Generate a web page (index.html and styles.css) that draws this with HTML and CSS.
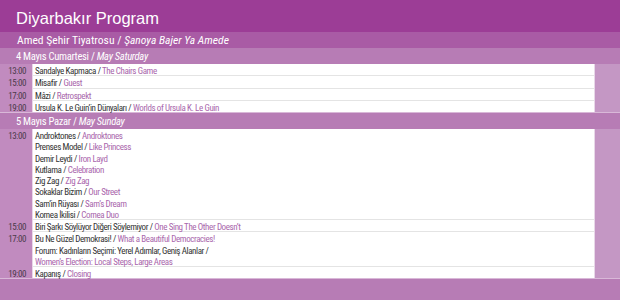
FILE: index.html
```html
<!DOCTYPE html>
<html lang="tr">
<head>
<meta charset="utf-8">
<title>Diyarbakır Program</title>
<link rel="stylesheet" href="styles.css">
</head>
<body>
<div class="page">
  <h1 class="title">Diyarbakır Program</h1>
  <div class="venue">Amed Şehir Tiyatrosu / <em>Şanoya Bajer Ya Amede</em></div>

  <h2 class="day">4 Mayıs Cumartesi / <em>May Saturday</em></h2>
  <div class="table">
    <div class="row">
      <div class="time"><div class="line">13:00</div></div>
      <div class="items"><div class="line">Sandalye Kapmaca / <span class="en">The Chairs Game</span></div></div>
      <div class="edge"></div>
    </div>
    <div class="row">
      <div class="time"><div class="line">15:00</div></div>
      <div class="items"><div class="line">Misafir / <span class="en">Guest</span></div></div>
      <div class="edge"></div>
    </div>
    <div class="row">
      <div class="time"><div class="line">17:00</div></div>
      <div class="items"><div class="line">Mâzi / <span class="en">Retrospekt</span></div></div>
      <div class="edge"></div>
    </div>
    <div class="row">
      <div class="time"><div class="line">19:00</div></div>
      <div class="items"><div class="line">Ursula K. Le Guin’in Dünyaları / <span class="en">Worlds of Ursula K. Le Guin</span></div></div>
      <div class="edge"></div>
    </div>
  </div>

  <h2 class="day">5 Mayıs Pazar / <em>May Sunday</em></h2>
  <div class="table">
    <div class="row">
      <div class="time"><div class="line">13:00</div></div>
      <div class="items">
        <div class="line">Androktones / <span class="en">Androktones</span></div>
        <div class="line">Prenses Model / <span class="en">Like Princess</span></div>
        <div class="line">Demir Leydi / <span class="en">Iron Layd</span></div>
        <div class="line">Kutlama / <span class="en">Celebration</span></div>
        <div class="line">Zig Zag / <span class="en">Zig Zag</span></div>
        <div class="line">Sokaklar Bizim / <span class="en">Our Street</span></div>
        <div class="line">Sam’in Rüyası / <span class="en">Sam’s Dream</span></div>
        <div class="line">Kornea İkilisi / <span class="en">Cornea Duo</span></div>
      </div>
      <div class="edge"></div>
    </div>
    <div class="row">
      <div class="time"><div class="line">15:00</div></div>
      <div class="items"><div class="line">Biri Şarkı Söylüyor Diğeri Söylemiyor / <span class="en">One Sing The Other Doesn’t</span></div></div>
      <div class="edge"></div>
    </div>
    <div class="row">
      <div class="time"><div class="line">17:00</div></div>
      <div class="items">
        <div class="line">Bu Ne Güzel Demokrasi! / <span class="en">What a Beautiful Democracies!</span></div>
        <div class="line">Forum: Kadınların Seçimi: Yerel Adımlar, Geniş Alanlar /</div>
        <div class="line"><span class="en">Women’s Election: Local Steps, Large Areas</span></div>
      </div>
      <div class="edge"></div>
    </div>
    <div class="row">
      <div class="time"><div class="line">19:00</div></div>
      <div class="items"><div class="line">Kapanış / <span class="en">Closing</span></div></div>
      <div class="edge"></div>
    </div>
  </div>
  <div class="footer"></div>
</div>
</body>
</html>
```
FILE: styles.css
```css
html, body {
  margin: 0;
  padding: 0;
}
body {
  width: 620px;
  height: 300px;
  overflow: hidden;
  background: #b77cb5;
  font-family: "Roboto Condensed", "Liberation Sans", sans-serif;
}
.page {
  display: flex;
  flex-direction: column;
}
.title {
  margin: 0;
  height: 32px;
  box-sizing: border-box;
  padding: 8px 0 0 16px;
  background: #9c3d96;
  color: #fff;
  font-family: "Liberation Sans", sans-serif;
  font-weight: normal;
  font-size: 16.5px;
  line-height: 20px;
}
.venue {
  height: 16px;
  padding-left: 17px;
  background: #a95ba5;
  color: #fff;
  font-size: 11.6px;
  line-height: 16px;
}
.day {
  margin: 0;
  height: 16px;
  padding-left: 16px;
  background: #b77cb5;
  color: #fff;
  font-weight: normal;
  font-size: 10.6px;
  letter-spacing: -0.3px;
  line-height: 17px;
}
.table {
  display: flex;
  flex-direction: column;
  border-bottom: 1px solid #d9b8d8;
}
.row {
  display: grid;
  grid-template-columns: 33px 1fr 26px;
}
.time,
.items {
  font-size: 9px;
  letter-spacing: -0.4px;
}
.line {
  line-height: 11.25px;
  padding-top: 2px;
  margin-bottom: -2px;
  white-space: nowrap;
}
.time {
  background: #c18bbf;
  color: #4a3a4a;
  text-align: right;
  padding-right: 6px;
  border-right: 1px solid #e9d6e8;
}
.items {
  background: #fff;
  border-bottom: 1px solid #e4e4e4;
  padding-left: 2px;
  color: #333;
}
.row:last-child .items {
  border-bottom: none;
}
.edge {
  background: #c497c4;
  border-left: 1px solid #e8d8e8;
}
.en {
  color: #a966ac;
}
.footer {
  height: 21px;
  background: #b77cb5;
}
```
